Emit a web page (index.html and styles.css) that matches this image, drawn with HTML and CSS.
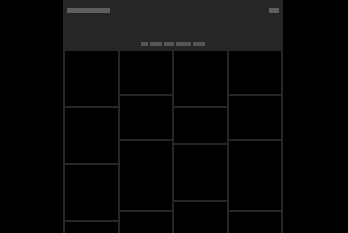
FILE: index.html
```html
<!DOCTYPE html>
<html lang="en">
<head>
  <meta charset="UTF-8">
  <meta name="viewport" content="width=device-width, initial-scale=1.0">
  <title>Gallery</title>
  <link rel="stylesheet" href="styles.css">
</head>
<body>
  <div class="page">
    <header class="top">
      <div class="top-row">
        <span class="bar title"></span>
        <span class="bar menu"></span>
      </div>
      <nav class="nav">
        <span class="bar" style="width:7px"></span>
        <span class="bar" style="width:12px"></span>
        <span class="bar" style="width:10px"></span>
        <span class="bar" style="width:15px"></span>
        <span class="bar" style="width:12px"></span>
      </nav>
    </header>

    <div class="grid">
      <div class="col">
        <div class="tile" style="height:55px"></div>
        <div class="tile" style="height:55px"></div>
        <div class="tile" style="height:55px"></div>
        <div class="tile" style="height:55px"></div>
      </div>
      <div class="col">
        <div class="tile" style="height:43px"></div>
        <div class="tile" style="height:43px"></div>
        <div class="tile" style="height:69px"></div>
        <div class="tile" style="height:55px"></div>
      </div>
      <div class="col">
        <div class="tile" style="height:55px"></div>
        <div class="tile" style="height:35px"></div>
        <div class="tile" style="height:55px"></div>
        <div class="tile" style="height:55px"></div>
      </div>
      <div class="col">
        <div class="tile" style="height:43px"></div>
        <div class="tile" style="height:43px"></div>
        <div class="tile" style="height:69px"></div>
        <div class="tile" style="height:55px"></div>
      </div>
    </div>
  </div>
</body>
</html>
```

FILE: styles.css
```css
body {
  margin: 0;
  background: #000;
  font-family: "Liberation Sans", sans-serif;
  overflow: hidden;
}
.page {
  width: 220px;
  margin-left: 63px;
  background: #262626;
  min-height: 233px;
}
.top {
  height: 50px;
  box-sizing: border-box;
  padding: 8px 4px 0;
  display: flex;
  flex-direction: column;
}
.top-row {
  display: flex;
  justify-content: space-between;
}
.bar {
  display: block;
  height: 5px;
  background: #5e5e5e;
}
.title {
  width: 43px;
}
.menu {
  width: 10px;
}
.nav {
  display: flex;
  justify-content: center;
  gap: 2px;
  margin-top: 29px;
}
.nav .bar {
  height: 4px;
  background: #555;
}
.grid {
  display: flex;
  gap: 2px;
  padding: 1px 2px 0;
}
.col {
  flex: 1;
  display: flex;
  flex-direction: column;
  gap: 2px;
}
.tile {
  background: #000;
}
```
